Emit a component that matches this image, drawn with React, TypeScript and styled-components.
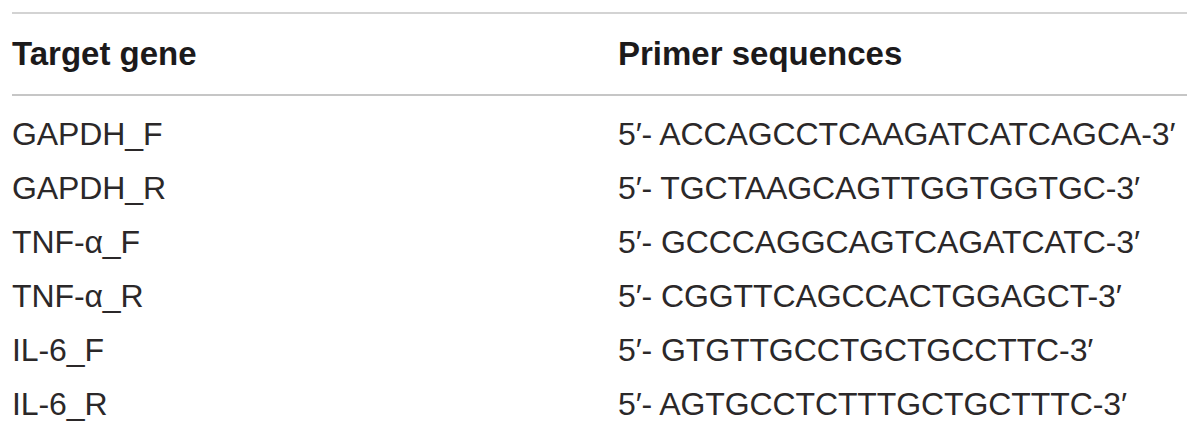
import React from "react";
import styled, { createGlobalStyle } from "styled-components";

const Global = createGlobalStyle`
  html, body { margin: 0; padding: 0; background: #ffffff; }
  body { font-family: "Liberation Sans", Arial, Helvetica, sans-serif; }
`;

const Page = styled.div`
  width: 1200px;
  height: 433px;
  padding: 12px 13px 0 12px;
  box-sizing: border-box;
  overflow: hidden;
`;

const Table = styled.table`
  width: 1175px;
  border-collapse: collapse;
  border-top: 2px solid #d3d3d3;
`;

const HeadRow = styled.tr`
  border-bottom: 2px solid #c6c6c6;
`;

const HeadCell = styled.th<{ $w?: number }>`
  text-align: left;
  padding: 21px 0 22px 0;
  ${(p) => (p.$w ? `width: ${p.$w}px;` : "")}
  font-size: 33px;
  line-height: 37px;
  font-weight: 700;
  color: #1c1a1b;
`;

const Spacer = styled.tr`
  height: 12px;
`;

const Cell = styled.td`
  padding: 0;
  font-size: 32px;
  line-height: 54px;
  height: 54px;
  font-weight: 400;
  color: #2b2829;
  letter-spacing: -0.1px;
  white-space: nowrap;
`;

const rows: [string, string][] = [
  ["GAPDH_F", "5′- ACCAGCCTCAAGATCATCAGCA-3′"],
  ["GAPDH_R", "5′- TGCTAAGCAGTTGGTGGTGC-3′"],
  ["TNF-α_F", "5′- GCCCAGGCAGTCAGATCATC-3′"],
  ["TNF-α_R", "5′- CGGTTCAGCCACTGGAGCT-3′"],
  ["IL-6_F", "5′- GTGTTGCCTGCTGCCTTC-3′"],
  ["IL-6_R", "5′- AGTGCCTCTTTGCTGCTTTC-3′"],
];

export default function App() {
  return (
    <>
      <Global />
      <Page>
        <Table>
          <thead>
            <HeadRow>
              <HeadCell $w={606}>Target gene</HeadCell>
              <HeadCell>Primer sequences</HeadCell>
            </HeadRow>
          </thead>
          <tbody>
            <Spacer>
              <td colSpan={2} />
            </Spacer>
            {rows.map(([g, s]) => (
              <tr key={g}>
                <Cell>{g}</Cell>
                <Cell>{s}</Cell>
              </tr>
            ))}
          </tbody>
        </Table>
      </Page>
    </>
  );
}
